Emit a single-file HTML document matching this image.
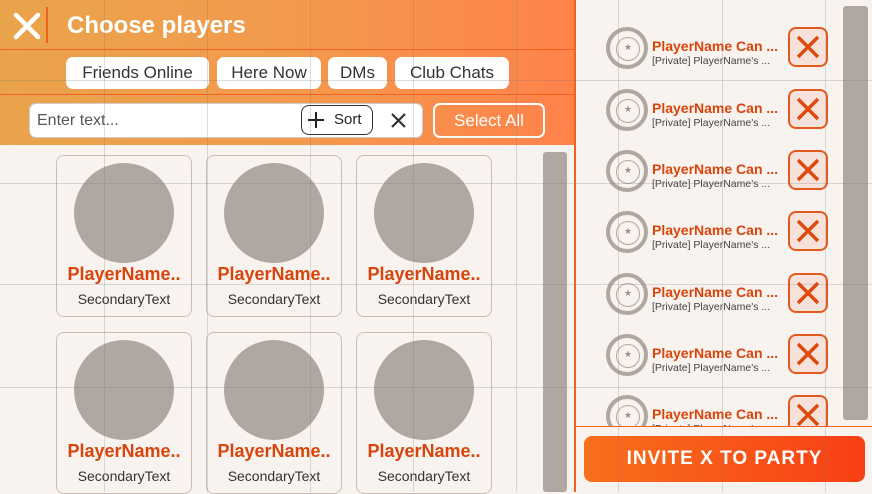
<!DOCTYPE html>
<html><head><style>
*{margin:0;padding:0;box-sizing:border-box}
body{width:872px;height:492px;overflow:hidden;background:#f8f3ef;font-family:"Liberation Sans",sans-serif;position:relative}
.a{position:absolute}
.hdr{left:0;top:0;width:574px;height:145px;background:linear-gradient(90deg,#e9a44b,#f29a4c 50%,#ff824b)}
.tab{position:absolute;top:57px;height:32px;background:#fff;border-radius:7px;font-size:17px;color:#333;text-align:center;line-height:32px}
.card{position:absolute;width:136px;height:162px;border:1px solid #c9beb7;border-radius:8px}
.card .c{position:absolute;left:17px;top:7px;width:100px;height:100px;border-radius:50%;background:#b1a7a1}
.card .n{position:absolute;top:108px;width:100%;text-align:center;color:#d9440c;font-weight:bold;font-size:18px}
.card .s{position:absolute;top:135px;width:100%;text-align:center;color:#333;font-size:14px}
.row{position:absolute;left:606px;width:230px;height:44px}
.av{position:absolute;left:0;top:0;width:42px;height:42px;border-radius:50%;border:4px solid #b1a7a1;background:#f8f3ef}
.av:after{content:"";position:absolute;left:6px;top:6px;width:22px;height:22px;border-radius:50%;border:1.5px solid #b1a7a1}
.av b{position:absolute;left:14px;top:11px;font-size:9px;color:#9a908a;font-weight:normal;z-index:1}
.pn{position:absolute;left:46px;top:11px;color:#d9440c;font-weight:bold;font-size:14px;white-space:nowrap}
.ps{position:absolute;left:46px;top:28px;color:#444;font-size:10.5px;white-space:nowrap}
.xb{position:absolute;left:182px;top:0;width:40px;height:40px;border:2px solid #e25a1e;border-radius:8px;background:#f6e2da}
.g{position:absolute;background:rgba(120,120,120,.25)}
</style></head><body>
<div class="a hdr"></div>
<div class="a" style="left:0;top:49px;width:574px;height:1px;background:#f0621f"></div>
<div class="a" style="left:0;top:94px;width:574px;height:1px;background:#f0621f"></div>
<svg class="a" style="left:13px;top:12px" width="28" height="28"><path d="M3 3L25 25M25 3L3 25" stroke="#fff" stroke-width="4.5" stroke-linecap="round"/></svg>
<div class="a" style="left:46px;top:7px;width:2px;height:36px;background:#f0621f"></div>
<div class="a" style="left:67px;top:12px;color:#fff;font-weight:bold;font-size:24px">Choose players</div>
<div class="tab" style="left:66px;width:143px">Friends Online</div>
<div class="tab" style="left:217px;width:104px">Here Now</div>
<div class="tab" style="left:328px;width:59px">DMs</div>
<div class="tab" style="left:395px;width:114px">Club Chats</div>
<div class="a" style="left:29px;top:103px;width:394px;height:35px;background:#fff;border:1px solid #ccc;border-radius:7px"></div>
<div class="a" style="left:37px;top:112px;font-size:16px;color:#555">Enter text...</div>
<div class="a" style="left:301px;top:105px;width:72px;height:30px;border:1.5px solid #333;border-radius:8px;font-size:15px;color:#222;line-height:28px;padding-left:32px">Sort</div>
<svg class="a" style="left:307px;top:111px" width="18" height="18"><path d="M9 1V17M1 9H17" stroke="#222" stroke-width="2"/></svg>
<svg class="a" style="left:390px;top:112px" width="17" height="17"><path d="M2 2L15 15M15 2L2 15" stroke="#333" stroke-width="2.2"/></svg>
<div class="a" style="left:433px;top:103px;width:112px;height:35px;border:2px solid #fff;border-radius:7px;color:#fff;font-size:17px;text-align:center;line-height:31px">Select All</div>

<div class="card" style="left:56px;top:155px"><div class="c"></div><div class="n">PlayerName..</div><div class="s">SecondaryText</div></div>
<div class="card" style="left:206px;top:155px"><div class="c"></div><div class="n">PlayerName..</div><div class="s">SecondaryText</div></div>
<div class="card" style="left:356px;top:155px"><div class="c"></div><div class="n">PlayerName..</div><div class="s">SecondaryText</div></div>
<div class="card" style="left:56px;top:332px"><div class="c"></div><div class="n">PlayerName..</div><div class="s">SecondaryText</div></div>
<div class="card" style="left:206px;top:332px"><div class="c"></div><div class="n">PlayerName..</div><div class="s">SecondaryText</div></div>
<div class="card" style="left:356px;top:332px"><div class="c"></div><div class="n">PlayerName..</div><div class="s">SecondaryText</div></div>
<div class="a" style="left:543px;top:152px;width:24px;height:340px;background:#b1a7a1;border-radius:3px"></div>

<div class="a" style="left:574px;top:0;width:2px;height:492px;background:#f0621f"></div>
<div class="a" style="left:843px;top:6px;width:25px;height:414px;background:#b1a7a1;border-radius:3px"></div>

<div class="row" style="top:27px"><div class="av"><b>★</b></div><div class="pn">PlayerName Can ...</div><div class="ps">[Private] PlayerName's ...</div><div class="xb"><svg width="36" height="36"><path d="M8 8L28 28M28 8L8 28" stroke="#dd4a10" stroke-width="3.5"/></svg></div></div>
<div class="row" style="top:89px"><div class="av"><b>★</b></div><div class="pn">PlayerName Can ...</div><div class="ps">[Private] PlayerName's ...</div><div class="xb"><svg width="36" height="36"><path d="M8 8L28 28M28 8L8 28" stroke="#dd4a10" stroke-width="3.5"/></svg></div></div>
<div class="row" style="top:150px"><div class="av"><b>★</b></div><div class="pn">PlayerName Can ...</div><div class="ps">[Private] PlayerName's ...</div><div class="xb"><svg width="36" height="36"><path d="M8 8L28 28M28 8L8 28" stroke="#dd4a10" stroke-width="3.5"/></svg></div></div>
<div class="row" style="top:211px"><div class="av"><b>★</b></div><div class="pn">PlayerName Can ...</div><div class="ps">[Private] PlayerName's ...</div><div class="xb"><svg width="36" height="36"><path d="M8 8L28 28M28 8L8 28" stroke="#dd4a10" stroke-width="3.5"/></svg></div></div>
<div class="row" style="top:273px"><div class="av"><b>★</b></div><div class="pn">PlayerName Can ...</div><div class="ps">[Private] PlayerName's ...</div><div class="xb"><svg width="36" height="36"><path d="M8 8L28 28M28 8L8 28" stroke="#dd4a10" stroke-width="3.5"/></svg></div></div>
<div class="row" style="top:334px"><div class="av"><b>★</b></div><div class="pn">PlayerName Can ...</div><div class="ps">[Private] PlayerName's ...</div><div class="xb"><svg width="36" height="36"><path d="M8 8L28 28M28 8L8 28" stroke="#dd4a10" stroke-width="3.5"/></svg></div></div>
<div class="row" style="top:395px;height:31px;overflow:hidden"><div class="av"><b>★</b></div><div class="pn">PlayerName Can ...</div><div class="ps">[Private] PlayerName's ...</div><div class="xb"><svg width="36" height="36"><path d="M8 8L28 28M28 8L8 28" stroke="#dd4a10" stroke-width="3.5"/></svg></div></div>
<div class="a" style="left:576px;top:426px;width:296px;height:1px;background:#f0621f"></div>
<div class="a" style="left:576px;top:427px;width:296px;height:65px;background:#f8f3ef"></div>
<div class="a" style="left:584px;top:436px;width:281px;height:46px;border-radius:8px;background:linear-gradient(90deg,#f7701c,#f83f14);color:#fff;font-weight:bold;font-size:19px;text-align:center;line-height:46px;letter-spacing:1px">INVITE X TO PARTY</div>

<div class="g" style="left:104px;top:0;width:1px;height:492px"></div>
<div class="g" style="left:207px;top:0;width:1px;height:492px"></div>
<div class="g" style="left:310px;top:0;width:1px;height:492px"></div>
<div class="g" style="left:413px;top:0;width:1px;height:492px"></div>
<div class="g" style="left:516px;top:0;width:1px;height:492px"></div>
<div class="g" style="left:618px;top:0;width:1px;height:492px"></div>
<div class="g" style="left:722px;top:0;width:1px;height:492px"></div>
<div class="g" style="left:825px;top:0;width:1px;height:492px"></div>
<div class="g" style="left:0;top:80px;width:872px;height:1px"></div>
<div class="g" style="left:0;top:183px;width:872px;height:1px"></div>
<div class="g" style="left:0;top:284px;width:872px;height:1px"></div>
<div class="g" style="left:0;top:387px;width:872px;height:1px"></div>
</body></html>
